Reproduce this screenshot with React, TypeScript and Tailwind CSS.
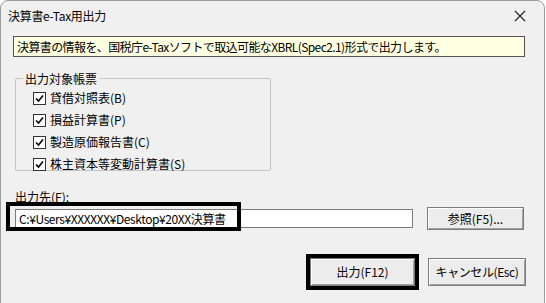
import React from "react";

const font = { fontFamily: '"Noto Sans CJK JP", "Noto Sans", sans-serif' };

function Check({ label }: { label: string }) {
  return (
    <div className="flex h-[22px] items-center">
      <span className="flex h-[13px] w-[13px] items-center justify-center border border-[#333] bg-white">
        <svg width="9" height="9" viewBox="0 0 9 9">
          <path d="M1 4.5 L3.5 7 L8 1.5" fill="none" stroke="#000" strokeWidth="1.6" />
        </svg>
      </span>
      <span className="ml-[4px]">{label}</span>
    </div>
  );
}

function Btn({ children, className = "" }: { children: React.ReactNode; className?: string }) {
  return (
    <div
      className={
        "flex items-center justify-center border border-[#7a7a7a] bg-[#ececec] shadow-[inset_1px_1px_0_#fff,inset_-1px_-1px_0_#a0a0a0] " +
        className
      }
    >
      {children}
    </div>
  );
}

export default function App() {
  return (
    <div className="h-[303px] w-[546px] overflow-hidden bg-white text-[12px] leading-none text-black" style={font}>
      <div className="relative h-[310px] w-[545px] rounded-[8px] border border-[#9a9a9a] bg-[#f0f0f0]">
        {/* title bar */}
        <div className="flex h-[29px] items-center justify-between pl-[7px] pr-[18px]">
          <span className="tracking-[-0.3px]">決算書e-Tax用出力</span>
          <svg width="12" height="12" viewBox="0 0 12 12">
            <path d="M1 1 L11 11 M11 1 L1 11" stroke="#222" strokeWidth="1.1" />
          </svg>
        </div>

        <div className="pl-[12px] pr-[19px] pt-[6px]">
          <div className="flex h-[21px] items-center border border-[#555] bg-[#ffffe1] pl-[3px] tracking-[-0.6px]">
            決算書の情報を、国税庁e-Taxソフトで取込可能なXBRL(Spec2.1)形式で出力します。
          </div>
        </div>

        {/* group box */}
        <div className="ml-[14px] mt-[21px] h-[93px] w-[256px] rounded-[2px] border border-[#c4c4c4] pl-[17px] pt-[11px]">
          <div className="-ml-[10px] -mt-[18px] mb-[1px] w-fit bg-[#f0f0f0] px-[2px] leading-[14px]">出力対象帳票</div>
          <Check label="貸借対照表(B)" />
          <Check label="損益計算書(P)" />
          <Check label="製造原価報告書(C)" />
          <Check label="株主資本等変動計算書(S)" />
        </div>

        {/* output destination */}
        <div className="ml-[14px] mt-[19px] leading-[14px]">出力先(F):</div>
        <div className="relative ml-[14px] mt-[3px] flex items-center">
          <div className="flex h-[19px] w-[398px] items-center border border-[#7a7a7a] bg-white pl-[3px] tracking-[-0.4px]">
            C:¥Users¥XXXXXX¥Desktop¥20XX決算書
          </div>
          <Btn className="ml-[14px] h-[23px] w-[97px]">参照(F5)...</Btn>
          <div className="pointer-events-none absolute left-[-9px] top-[-5px] h-[29px] w-[235px] border-[4px] border-black" />
        </div>

        {/* buttons */}
        <div className="mt-[24px] flex justify-end pr-[18px]">
          <div className="border-[4px] border-black">
            <Btn className="h-[28px] w-[105px]">出力(F12)</Btn>
          </div>
          <Btn className="ml-[9px] mt-[4px] h-[28px] w-[98px] tracking-[-0.4px]">キャンセル(Esc)</Btn>
        </div>
      </div>
    </div>
  );
}
